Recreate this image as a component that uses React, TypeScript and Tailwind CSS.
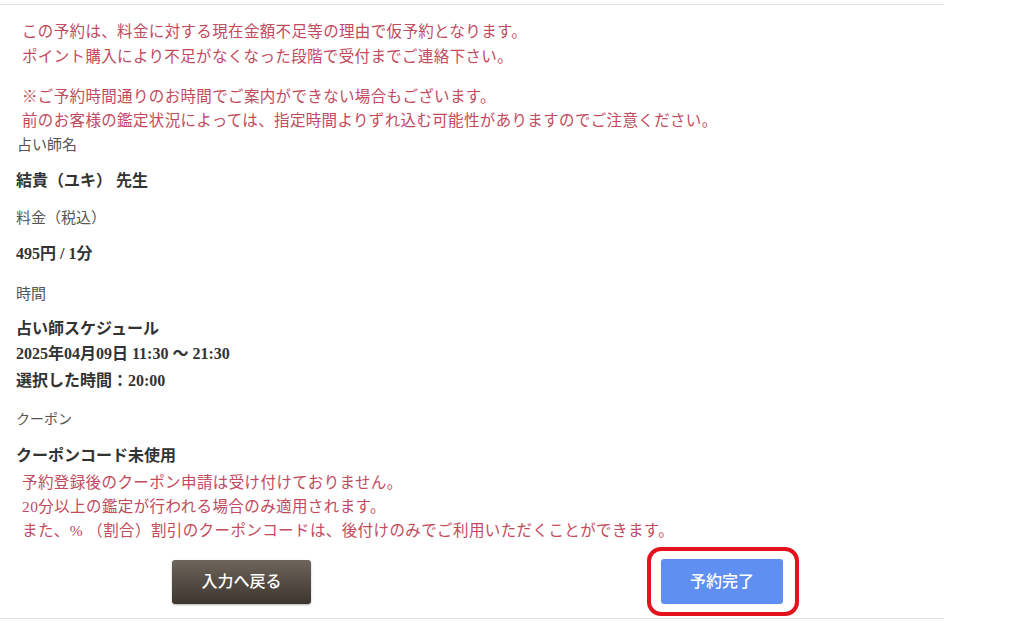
import React from "react";

const font = { fontFamily: '"Liberation Serif", "Noto Sans CJK JP", serif' };

export default function App() {
  return (
    <div className="w-[1024px] h-[621px] bg-white overflow-hidden pt-[4px]" style={font}>
      <div className="w-[944px] border-t border-b border-[#e3e3e3] bg-white pl-[16px] pt-[14px] pb-[14px]">
        <div className="pl-[6px] text-[#c24a5c] text-[15.5px] leading-[25px] tracking-[0.35px]">
          <p>この予約は、料金に対する現在金額不足等の理由で仮予約となります。</p>
          <p>ポイント購入により不足がなくなった段階で受付までご連絡下さい。</p>
          <p className="mt-[16px] leading-[24px]">※ご予約時間通りのお時間でご案内ができない場合もございます。</p>
          <p className="leading-[24px]">前のお客様の鑑定状況によっては、指定時間よりずれ込む可能性がありますのでご注意ください。</p>
        </div>
        <div className="text-[15px] leading-[24px]">
          <p className="pl-[1px] text-[#555]">占い師名</p>
          <p className="mt-[12px] text-[#333] text-[16px] font-semibold">結貴（ユキ） 先生</p>
          <p className="mt-[13px] text-[#555]">料金（税込）</p>
          <p className="mt-[12px] text-[#333] text-[16px] font-semibold">495円 / 1分</p>
          <p className="mt-[16px] text-[#555]">時間</p>
          <p className="mt-[11px] text-[#333] text-[16px] font-semibold">占い師スケジュール</p>
          <p className="mt-[1px] text-[#333] text-[16px] font-semibold">2025年04月09日 11:30 ～ 21:30</p>
          <p className="mt-[3px] text-[#333] text-[16px] font-semibold">選択した時間：20:00</p>
          <p className="mt-[15px] text-[#555] text-[14px]">クーポン</p>
          <p className="mt-[12px] text-[#333] text-[16px] font-semibold">クーポンコード未使用</p>
        </div>
        <div className="mt-[3px] pl-[6px] text-[#c24a5c] text-[15.5px] leading-[24px] tracking-[0.4px]">
          <p>予約登録後のクーポン申請は受け付けておりません。</p>
          <p>20分以上の鑑定が行われる場合のみ適用されます。</p>
          <p>また、% （割合）割引のクーポンコードは、後付けのみでご利用いただくことができます。</p>
        </div>
        <div className="mt-[16px] flex items-center pl-[156px] gap-[350px]">
          <button className="w-[139px] h-[44px] rounded-[3px] bg-gradient-to-b from-[#6e655b] to-[#3d362f] text-white text-[16px] font-medium shadow-[0_1px_2px_rgba(0,0,0,0.3)]">
            入力へ戻る
          </button>
          <div className="relative">
            <button className="w-[122px] h-[45px] rounded-[3px] bg-[#5f8ff0] text-white text-[16px] font-medium">
              予約完了
            </button>
            <div className="absolute left-[-14px] top-[-12px] w-[152px] h-[69px] rounded-[14px] border-[4px] border-[#e3121c]" />
          </div>
        </div>
      </div>
    </div>
  );
}
